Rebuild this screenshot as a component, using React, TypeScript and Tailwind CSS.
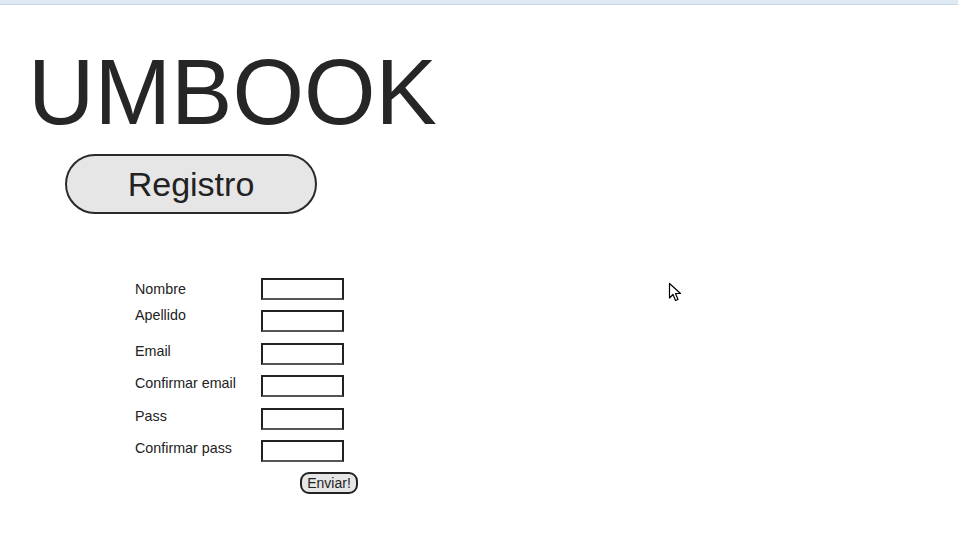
import React from "react";

const fields = [
  { label: "Nombre", rowClass: "mt-0", labelClass: "mt-[3px]" },
  { label: "Apellido", rowClass: "mt-[10px]", labelClass: "-mt-[3px]" },
  { label: "Email", rowClass: "mt-[11px]", labelClass: "mt-0" },
  { label: "Confirmar email", rowClass: "mt-[10px]", labelClass: "mt-0" },
  { label: "Pass", rowClass: "mt-[11px]", labelClass: "mt-0" },
  { label: "Confirmar pass", rowClass: "mt-[10px]", labelClass: "mt-0" },
];

const Cursor = () => (
  <svg
    className="absolute left-[668px] top-[282px]"
    width="14"
    height="21"
    viewBox="0 0 14 21"
  >
    <path
      d="M1.5 1.5 L1.5 16 L5 12.5 L7.5 18.5 L10 17.5 L7.5 11.5 L12.5 11.5 Z"
      fill="#fff"
      stroke="#000"
      strokeWidth="1.2"
      strokeLinejoin="round"
    />
  </svg>
);

export default function App() {
  return (
    <div className="relative h-[538px] w-[958px] overflow-hidden bg-white font-['Liberation_Sans',Arial,sans-serif] text-[#222]">
      <div className="h-[5px] border-b border-[#c9d6e3] bg-[#dfe9f3]" />

      <h1 className="ml-[28px] mt-[41px] text-[92px] leading-[92px] font-normal text-[#262626]">
        UMBOOK
      </h1>

      <div className="ml-[65px] mt-[16px] flex h-[60px] w-[252px] items-center justify-center rounded-[30px] border-2 border-[#2a2a2a] bg-[#e6e6e6] text-[34px] leading-none">
        Registro
      </div>

      <form
        className="ml-[135px] mt-[64px]"
        onSubmit={(e) => e.preventDefault()}
      >
        {fields.map((f) => (
          <div key={f.label} className={`flex h-[22px] items-start ${f.rowClass}`}>
            <label className={`w-[126px] text-[14.3px] leading-4 ${f.labelClass}`}>
              {f.label}
            </label>
            <input
              type="text"
              className="h-[22px] w-[83px] border-2 border-[#222] border-b-[#555] bg-white outline-none"
            />
          </div>
        ))}
        <div className="mt-[10px] pl-[165px]">
          <button
            type="submit"
            className="flex h-[22px] w-[58px] items-center justify-center rounded-[9px] border-2 border-[#222] bg-[#e6e6e6] text-[14px] leading-none"
          >
            Enviar!
          </button>
        </div>
      </form>

      <Cursor />
    </div>
  );
}
